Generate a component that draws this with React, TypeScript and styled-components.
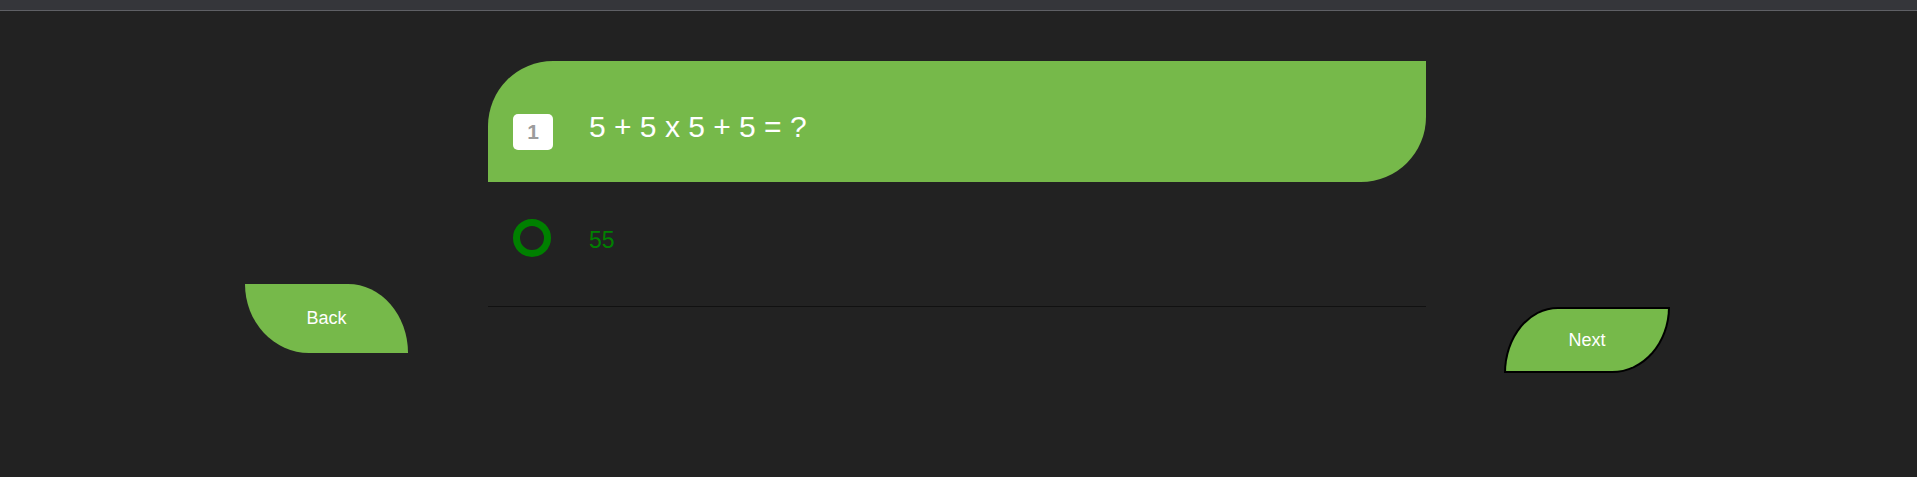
import React from 'react';
import styled, { createGlobalStyle } from 'styled-components';

// Global

const GlobalStyle = createGlobalStyle`
  html, body {
    margin: 0;
    padding: 0;
    background: #222222;
    font-family: 'Liberation Sans', Arial, sans-serif;
  }
`;

// Styled Components

const Page = styled.div`
  min-height: 477px;
  background: #222222;
`;

const TopBar = styled.div`
  height: 10px;
  background: #35363a;
  border-bottom: 1px solid #5f6065;
`;

const Stage = styled.div`
  display: flex;
  justify-content: center;
  align-items: flex-start;
  padding: 50px 2px 0 0;
`;

const QuizColumn = styled.div`
  width: 938px;
  margin: 0 78px 0 80px;
`;

const QuestionHeader = styled.div`
  display: flex;
  align-items: center;
  gap: 36px;
  height: 121px;
  padding: 20px 0 0 25px;
  box-sizing: border-box;
  background: #76b94a;
  border-radius: 65px 0 65px 0;
`;

const NumberBadge = styled.div`
  width: 40px;
  height: 36px;
  display: flex;
  align-items: center;
  justify-content: center;
  background: #ffffff;
  border-radius: 5px;
  color: #9c9c9c;
  font-size: 21px;
  font-weight: bold;
`;

const QuestionText = styled.div`
  color: #ffffff;
  font-size: 30px;
  margin-bottom: 10px;
`;

const OptionRow = styled.div`
  display: flex;
  align-items: center;
  gap: 38px;
  padding: 37px 25px 49px;
  border-bottom: 1px solid #111111;
`;

const Radio = styled.div`
  width: 38px;
  height: 38px;
  box-sizing: border-box;
  border: 7px solid #008000;
  border-radius: 50%;
`;

const OptionText = styled.div`
  color: #008000;
  font-size: 23px;
  margin-top: 5px;
`;

const NavButton = styled.button<{ $dir: 'back' | 'next'; $top: number }>`
  flex: none;
  margin-top: ${(p) => p.$top}px;
  width: ${(p) => (p.$dir === 'back' ? 163 : 166)}px;
  height: ${(p) => (p.$dir === 'back' ? 69 : 66)}px;
  background: #76b94a;
  color: #ffffff;
  font-family: 'Liberation Sans', Arial, sans-serif;
  font-size: 18px;
  cursor: pointer;
  border: ${(p) => (p.$dir === 'next' ? '2px solid #000' : 'none')};
  border-radius: ${(p) =>
    p.$dir === 'back'
      ? '0 60px 0 64px / 0 100% 0 100%'
      : '54px 0 58px 0 / 100% 0 100% 0'};
`;

// Page

const App: React.FC = () => {
  return (
    <Page>
      <GlobalStyle />
      <TopBar />
      <Stage>
        <NavButton $dir="back" $top={223}>Back</NavButton>
        <QuizColumn>
          <QuestionHeader>
            <NumberBadge>1</NumberBadge>
            <QuestionText>5 + 5 x 5 + 5 = ?</QuestionText>
          </QuestionHeader>
          <OptionRow>
            <Radio />
            <OptionText>55</OptionText>
          </OptionRow>
        </QuizColumn>
        <NavButton $dir="next" $top={246}>Next</NavButton>
      </Stage>
    </Page>
  );
};

export default App;
